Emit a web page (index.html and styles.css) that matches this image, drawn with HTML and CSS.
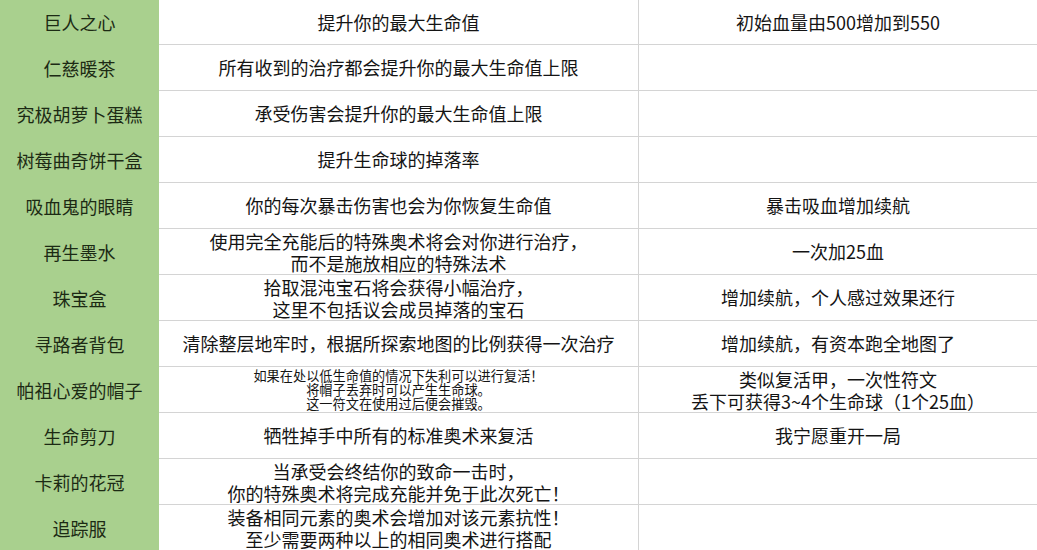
FILE: index.html
```html
<!DOCTYPE html>
<html lang="zh-CN">
<head>
<meta charset="utf-8">
<link rel="stylesheet" href="styles.css">
</head>
<body>
<div class="sheet">
  <div class="row first">
    <div class="name">巨人之心</div>
    <div class="desc">提升你的最大生命值</div>
    <div class="note">初始血量由500增加到550</div>
  </div>
  <div class="row">
    <div class="name">仁慈暖茶</div>
    <div class="desc">所有收到的治疗都会提升你的最大生命值上限</div>
    <div class="note"></div>
  </div>
  <div class="row">
    <div class="name">究极胡萝卜蛋糕</div>
    <div class="desc">承受伤害会提升你的最大生命值上限</div>
    <div class="note"></div>
  </div>
  <div class="row">
    <div class="name">树莓曲奇饼干盒</div>
    <div class="desc">提升生命球的掉落率</div>
    <div class="note"></div>
  </div>
  <div class="row">
    <div class="name">吸血鬼的眼睛</div>
    <div class="desc">你的每次暴击伤害也会为你恢复生命值</div>
    <div class="note">暴击吸血增加续航</div>
  </div>
  <div class="row">
    <div class="name">再生墨水</div>
    <div class="desc two">使用完全充能后的特殊奥术将会对你进行治疗，<br>而不是施放相应的特殊法术</div>
    <div class="note">一次加25血</div>
  </div>
  <div class="row">
    <div class="name">珠宝盒</div>
    <div class="desc two">拾取混沌宝石将会获得小幅治疗，<br>这里不包括议会成员掉落的宝石</div>
    <div class="note">增加续航，个人感过效果还行</div>
  </div>
  <div class="row">
    <div class="name">寻路者背包</div>
    <div class="desc">清除整层地牢时，根据所探索地图的比例获得一次治疗</div>
    <div class="note">增加续航，有资本跑全地图了</div>
  </div>
  <div class="row">
    <div class="name">帕祖心爱的帽子</div>
    <div class="desc small">
      <span class="line">如果在处以低生命值的情况下失利可以进行复活！</span>
      <span class="line">将帽子丢弃时可以产生生命球。</span>
      <span class="line">这一符文在使用过后便会摧毁。</span>
    </div>
    <div class="note two">类似复活甲，一次性符文<br>丢下可获得3~4个生命球（1个25血）</div>
  </div>
  <div class="row">
    <div class="name">生命剪刀</div>
    <div class="desc">牺牲掉手中所有的标准奥术来复活</div>
    <div class="note">我宁愿重开一局</div>
  </div>
  <div class="row">
    <div class="name">卡莉的花冠</div>
    <div class="desc two">当承受会终结你的致命一击时，<br>你的特殊奥术将完成充能并免于此次死亡！</div>
    <div class="note"></div>
  </div>
  <div class="row">
    <div class="name">追踪服</div>
    <div class="desc two">装备相同元素的奥术会增加对该元素抗性！<br>至少需要两种以上的相同奥术进行搭配</div>
    <div class="note"></div>
  </div>
</div>
</body>
</html>
```

FILE: styles.css
```css
html, body {
  margin: 0;
  padding: 0;
  background: #ffffff;
}

body {
  width: 1037px;
  height: 550px;
  overflow: hidden;
  font-family: "Noto Sans CJK SC", "Noto Sans", sans-serif;
  color: #141414;
}

.sheet {
  display: flex;
  flex-direction: column;
}

.row {
  display: grid;
  grid-template-columns: 159px 480px 1fr;
  height: 46px;
}

.row.first {
  height: 45px;
}

.name,
.desc,
.note {
  display: flex;
  align-items: center;
  justify-content: center;
  text-align: center;
  font-size: 18px;
  line-height: 23px;
  white-space: nowrap;
  overflow: visible;
}

.name {
  background: #a9d08e;
  color: #1c2a14;
}

.desc,
.note {
  border-bottom: 1px solid #d4d4d4;
}

.desc {
  border-right: 1px solid #d4d4d4;
}

.two {
  line-height: 22px;
}

.small {
  flex-direction: column;
  font-size: 13.2px;
  line-height: 14px;
}

.small .line {
  display: block;
  height: 14px;
  line-height: 14px;
  overflow: visible;
}
```
